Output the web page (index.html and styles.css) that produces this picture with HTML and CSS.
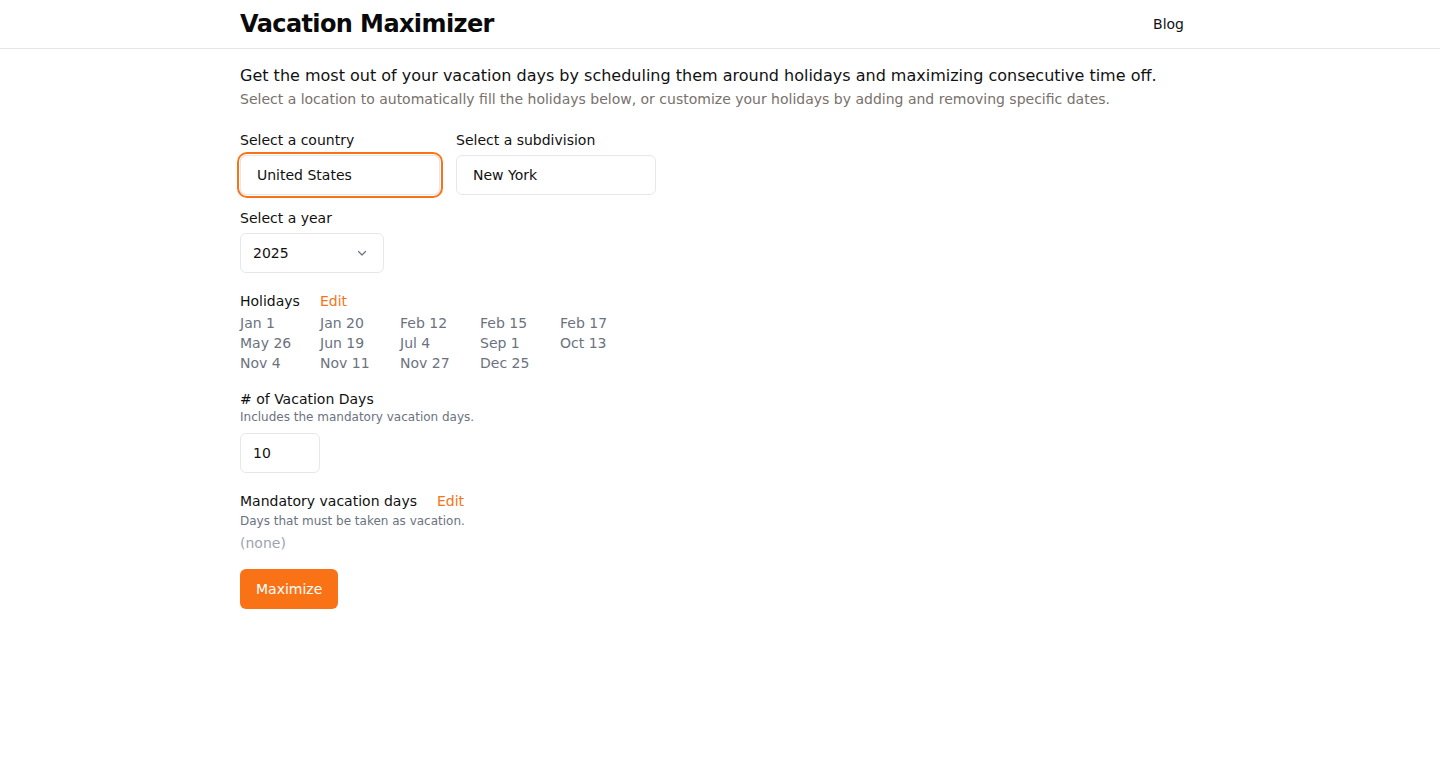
FILE: index.html
```html
<!DOCTYPE html>
<html lang="en">
<head>
<meta charset="utf-8">
<title>Vacation Maximizer</title>
<link rel="stylesheet" href="styles.css">
</head>
<body>
<header class="site-header">
  <div class="container header-inner">
    <h1 class="brand">Vacation Maximizer</h1>
    <a class="nav-link" href="#">Blog</a>
  </div>
</header>

<main class="container main">
  <p class="lead">Get the most out of your vacation days by scheduling them around holidays and maximizing consecutive time off.</p>
  <p class="sublead">Select a location to automatically fill the holidays below, or customize your holidays by adding and removing specific dates.</p>

  <div class="row location-row">
    <div class="field">
      <label class="label">Select a country</label>
      <div class="combo combo-focus">United States</div>
    </div>
    <div class="field">
      <label class="label">Select a subdivision</label>
      <div class="combo">New York</div>
    </div>
  </div>

  <div class="field year-field">
    <label class="label">Select a year</label>
    <div class="select">
      <span>2025</span>
      <svg class="chevron" width="12" height="12" viewBox="0 0 12 12" fill="none" stroke="#6b7280" stroke-width="1.2" stroke-linecap="round" stroke-linejoin="round"><path d="M2.5 4.5 6 8l3.5-3.5"/></svg>
    </div>
  </div>

  <section class="holidays">
    <div class="section-head">
      <span class="label">Holidays</span>
      <a class="edit" href="#">Edit</a>
    </div>
    <div class="dates">
      <span>Jan 1</span><span>Jan 20</span><span>Feb 12</span><span>Feb 15</span><span>Feb 17</span>
      <span>May 26</span><span>Jun 19</span><span>Jul 4</span><span>Sep 1</span><span>Oct 13</span>
      <span>Nov 4</span><span>Nov 11</span><span>Nov 27</span><span>Dec 25</span>
    </div>
  </section>

  <section class="vacation-days">
    <div class="label"># of Vacation Days</div>
    <div class="hint">Includes the mandatory vacation days.</div>
    <div class="number-input">10</div>
  </section>

  <section class="mandatory">
    <div class="section-head">
      <span class="label">Mandatory vacation days</span>
      <a class="edit" href="#">Edit</a>
    </div>
    <div class="hint hint-tight">Days that must be taken as vacation.</div>
    <div class="none">(none)</div>
  </section>

  <button class="btn-primary" type="button">Maximize</button>
</main>
</body>
</html>
```

FILE: styles.css
```css
* {
  box-sizing: border-box;
}

html, body {
  margin: 0;
  padding: 0;
  background: #ffffff;
  color: #111111;
  font-family: "DejaVu Sans", "Noto Sans", sans-serif;
}

.container {
  width: 960px;
  margin: 0 auto;
}

/* header bar */
.site-header {
  border-bottom: 1px solid #e5e7eb;
}

.header-inner {
  height: 48px;
  display: flex;
  align-items: center;
  justify-content: space-between;
}

.brand {
  margin: 0;
  font-size: 24px;
  line-height: 32px;
  font-weight: 700;
  letter-spacing: -0.025em;
  color: #0a0a0a;
}

.nav-link {
  font-size: 14px;
  line-height: 20px;
  color: #111111;
  text-decoration: none;
  padding: 0 16px;
}

/* main form */
.main {
  padding-top: 15px;
}

.lead {
  margin: 0;
  font-size: 16px;
  line-height: 24px;
  color: #111111;
}

.sublead {
  margin: 1px 0 0;
  font-size: 14px;
  line-height: 20px;
  color: #78716c;
}

.row {
  display: flex;
  gap: 16px;
}

.location-row {
  margin-top: 21px;
}

.field {
  display: flex;
  flex-direction: column;
}

.label {
  font-size: 14px;
  line-height: 20px;
  color: #111111;
}

.combo {
  margin-top: 5px;
  width: 200px;
  height: 40px;
  border: 1px solid #e5e7eb;
  border-radius: 6px;
  padding: 0 16px;
  display: flex;
  align-items: center;
  font-size: 14px;
  color: #111111;
}

/* focused combobox: white gap then orange ring */
.combo-focus {
  box-shadow: 0 0 0 1px #ffffff, 0 0 0 3px #f97316;
  border-radius: 7px;
}

.year-field {
  margin-top: 13px;
}

.select {
  margin-top: 5px;
  width: 144px;
  height: 40px;
  border: 1px solid #e5e7eb;
  border-radius: 6px;
  padding: 0 15px 0 12px;
  display: flex;
  align-items: center;
  justify-content: space-between;
  font-size: 14px;
  color: #111111;
}

.chevron {
  display: block;
}

.holidays {
  margin-top: 18px;
}

.section-head {
  display: flex;
  gap: 20px;
  align-items: center;
}

.edit {
  font-size: 14px;
  line-height: 20px;
  color: #f97316;
  text-decoration: none;
}

.dates {
  margin-top: 2px;
  display: grid;
  grid-template-columns: repeat(5, 80px);
  font-size: 14px;
  line-height: 20px;
  color: #6b7280;
}

.vacation-days {
  margin-top: 16px;
}

.hint {
  font-size: 12px;
  line-height: 16px;
  color: #6b7280;
}

.hint-tight {
  margin-top: 2px;
}

.number-input {
  margin-top: 8px;
  width: 80px;
  height: 40px;
  border: 1px solid #e5e7eb;
  border-radius: 6px;
  padding: 0 12px;
  display: flex;
  align-items: center;
  font-size: 14px;
  color: #111111;
}

.mandatory {
  margin-top: 18px;
}

.none {
  margin-top: 4px;
  font-size: 14px;
  line-height: 20px;
  color: #9ca3af;
}

.btn-primary {
  margin-top: 16px;
  height: 40px;
  padding: 0 16px;
  border: none;
  border-radius: 6px;
  background: #f97316;
  color: #ffffff;
  font-family: inherit;
  font-size: 14px;
  cursor: pointer;
}
```
